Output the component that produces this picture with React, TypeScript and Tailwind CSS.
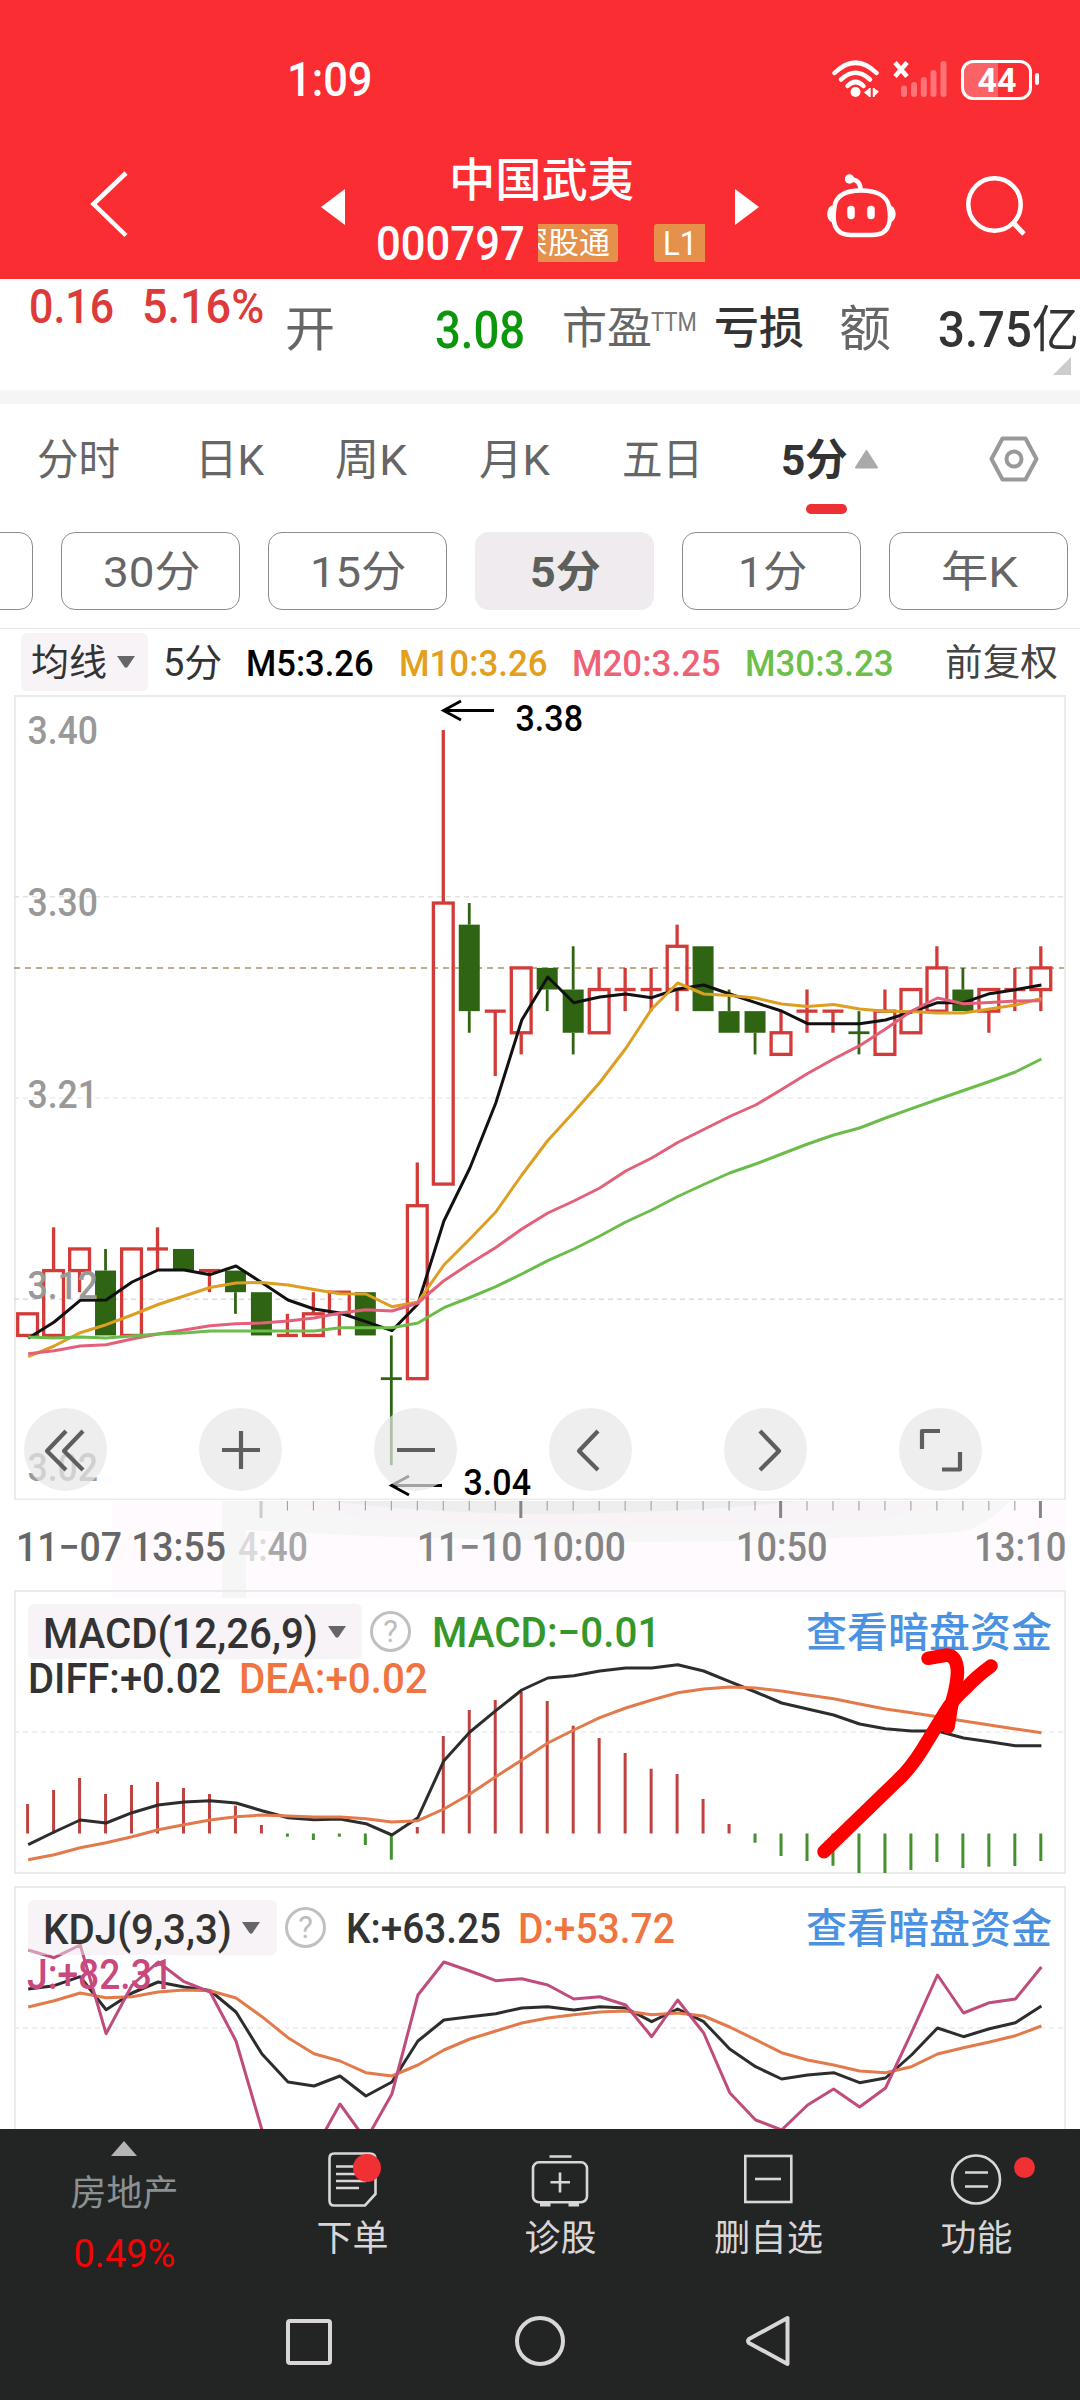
import { useLayoutEffect, useRef, type ReactNode } from 'react';

/** One line of text whose glyphs are squeezed to fill the width of its box. */
function Fit({ className = '', children }: { className?: string; children: ReactNode }) {
  const box = useRef<HTMLSpanElement>(null);
  const ink = useRef<HTMLSpanElement>(null);
  useLayoutEffect(() => {
    const b = box.current;
    const t = ink.current;
    if (!b || !t || !t.offsetWidth) return;
    t.style.transform = `translateX(-1px) scaleX(${(b.clientWidth + 3) / t.offsetWidth})`;
  });
  return (
    <span ref={box} className={`block shrink-0 leading-none whitespace-nowrap ${className}`}>
      <span ref={ink} className="inline-block origin-left leading-none">
        {children}
      </span>
    </span>
  );
}

const X0 = 27.6;
const STEP = 25.98;
const cx = (i: number) => X0 + i * STEP;
const py = (p: number) => 967.9 + (3.27 - p) * 2162;
const pts = (ys: number[]) => ys.map((y, i) => `${(cx(i) + 0.6).toFixed(1)},${y}`).join(' ');

type Candle = ['r' | 'g', number, number, number, number];

// colour, body top, body bottom, high, low
const candles: Candle[] = [
  ['r', 3.11, 3.1, 3.11, 3.1],
  ['r', 3.13, 3.1, 3.15, 3.1],
  ['r', 3.14, 3.13, 3.14, 3.12],
  ['g', 3.13, 3.1, 3.14, 3.1],
  ['r', 3.14, 3.1, 3.14, 3.1],
  ['r', 3.14, 3.14, 3.15, 3.13],
  ['g', 3.14, 3.13, 3.14, 3.13],
  ['r', 3.13, 3.13, 3.13, 3.12],
  ['g', 3.13, 3.12, 3.13, 3.11],
  ['g', 3.12, 3.1, 3.12, 3.1],
  ['r', 3.1, 3.1, 3.11, 3.1],
  ['r', 3.11, 3.1, 3.12, 3.1],
  ['r', 3.12, 3.11, 3.12, 3.1],
  ['g', 3.12, 3.1, 3.12, 3.1],
  ['g', 3.08, 3.08, 3.1, 3.04],
  ['r', 3.16, 3.08, 3.18, 3.08],
  ['r', 3.3, 3.17, 3.38, 3.17],
  ['g', 3.29, 3.25, 3.3, 3.24],
  ['r', 3.25, 3.25, 3.25, 3.22],
  ['r', 3.27, 3.24, 3.27, 3.23],
  ['g', 3.27, 3.26, 3.27, 3.25],
  ['g', 3.26, 3.24, 3.28, 3.23],
  ['r', 3.26, 3.24, 3.27, 3.24],
  ['r', 3.26, 3.26, 3.27, 3.25],
  ['r', 3.26, 3.26, 3.27, 3.25],
  ['r', 3.28, 3.26, 3.29, 3.25],
  ['g', 3.28, 3.25, 3.28, 3.25],
  ['g', 3.25, 3.24, 3.26, 3.24],
  ['g', 3.25, 3.24, 3.25, 3.23],
  ['r', 3.24, 3.23, 3.25, 3.23],
  ['r', 3.25, 3.25, 3.26, 3.24],
  ['r', 3.25, 3.25, 3.25, 3.24],
  ['g', 3.24, 3.24, 3.25, 3.23],
  ['r', 3.25, 3.23, 3.26, 3.23],
  ['r', 3.26, 3.24, 3.26, 3.24],
  ['r', 3.27, 3.25, 3.28, 3.25],
  ['g', 3.26, 3.25, 3.27, 3.25],
  ['r', 3.26, 3.25, 3.26, 3.24],
  ['r', 3.26, 3.26, 3.27, 3.25],
  ['r', 3.27, 3.26, 3.28, 3.25],
];

const m5 = [1338.3, 1322, 1300.3, 1300, 1282, 1270, 1270, 1274.7, 1266, 1282.7, 1300, 1309, 1313, 1321.7, 1330.7, 1304, 1221, 1168, 1103, 1020, 977, 1002.7, 997, 994, 997.7, 989, 985, 994, 1002.7, 1011, 1023.7, 1023.7, 1023.7, 1020, 1012, 1002.7, 1002.7, 993.7, 989.7, 985];
const m10 = [1356.7, 1346, 1332.7, 1324.7, 1315, 1304.5, 1296, 1287.5, 1283, 1282.5, 1285, 1289.5, 1293.8, 1294, 1306.7, 1302, 1265, 1239, 1212, 1175, 1140.5, 1112, 1082.5, 1048.5, 1009, 983, 994, 995.5, 998, 1004, 1006.5, 1004.5, 1009, 1011.3, 1011.5, 1013, 1013, 1009, 1005, 998.5];
const m20 = [1353.7, 1350.7, 1346, 1344.7, 1339, 1334, 1330, 1325.7, 1323.7, 1323, 1321, 1318, 1313, 1309.7, 1311, 1303, 1280.7, 1263.5, 1247.5, 1229, 1213, 1201, 1188, 1171, 1158, 1142.5, 1129.5, 1116.5, 1105, 1089.5, 1073.5, 1059, 1045.7, 1029, 1011, 998, 1003.7, 1002.5, 1001, 1000.7];
const m30 = [1337, 1338, 1337, 1338, 1336, 1334, 1333, 1331, 1331, 1331, 1331, 1331, 1327.7, 1327.7, 1327.7, 1323, 1307.7, 1297.5, 1286.7, 1274, 1260.7, 1249, 1236, 1222, 1210, 1196.5, 1184.5, 1173, 1164, 1154, 1144, 1135, 1128, 1118, 1108.7, 1099.5, 1090.5, 1081.5, 1072, 1059];

const macdBars = [1804, 1790, 1778, 1794, 1785, 1782, 1788, 1794, 1805.7, 1825, 1836.7, 1840, 1836.7, 1845, 1859.7, 1827, 1736, 1710, 1700, 1692, 1701, 1725.7, 1738, 1753, 1768.7, 1774, 1799, 1824, 1842.7, 1856, 1861, 1865.7, 1873, 1873, 1870, 1862, 1868, 1866.7, 1866, 1861];
const diff = [1844.7, 1832, 1820, 1823, 1812.7, 1805, 1802, 1800.7, 1803, 1810.7, 1817.7, 1819.7, 1819, 1823.7, 1835, 1817.7, 1760.7, 1732, 1710.7, 1690, 1678, 1675.7, 1671, 1668, 1668, 1664.7, 1671, 1681.7, 1692, 1703, 1709, 1715, 1724, 1728.7, 1731, 1731, 1738, 1741.7, 1745.7, 1745.7];
const dea = [1859.7, 1854.7, 1847.7, 1842.7, 1836.7, 1829.7, 1824.7, 1820, 1816.7, 1815, 1816, 1817, 1817, 1818.7, 1822, 1820.7, 1809, 1794, 1776.7, 1760, 1743, 1730, 1717.7, 1708, 1700, 1692.7, 1689, 1687, 1688, 1691, 1695, 1698.7, 1704, 1709, 1712.7, 1716.7, 1721, 1725, 1729, 1732.7];
const kLine = [1989, 1985.7, 1976.7, 2009.7, 1993, 1982, 1987, 1990.5, 2012, 2054, 2082, 2086, 2076, 2096, 2082, 2041, 2020, 2016.7, 2013.7, 2008, 2006.7, 2010, 2006.7, 2008, 2021.7, 2009, 2021.7, 2049, 2066.7, 2079, 2075, 2072.7, 2082.7, 2078, 2055, 2028, 2036.7, 2028.7, 2022.7, 2006];
const dLine = [2007, 2000.7, 1993, 1997.7, 1996.7, 1992, 1990, 1990.7, 1998, 2016.7, 2037.7, 2053.7, 2061, 2072.7, 2076, 2065, 2050, 2039, 2031, 2023, 2018, 2014.7, 2012, 2011, 2014.7, 2013, 2016, 2027, 2039.7, 2052.7, 2060, 2065, 2071, 2072.7, 2066.7, 2054, 2047.7, 2042, 2035.7, 2026];
const jLine = [1950, 1957.7, 1945, 2033.7, 1985, 1962, 1981.7, 1992, 2041, 2130, 2190, 2151, 2104, 2140, 2094, 1995, 1962, 1971, 1980.7, 1978.7, 1985, 1999, 1996.7, 2005, 2036.7, 2000, 2033, 2092.7, 2120, 2130, 2105, 2089, 2107, 2088, 2032.7, 1975, 2013, 2002.7, 1999, 1967];

const RED = '#d23b38';
const GREEN = '#2f6412';

function Line({ ys, color }: { ys: number[]; color: string }) {
  return <polyline points={pts(ys)} fill="none" stroke={color} strokeWidth="3" strokeLinejoin="round" />;
}

function CandleShape({ c, i }: { c: Candle; i: number }) {
  const [kind, top, bottom, high, low] = c;
  const x = cx(i);
  const color = kind === 'r' ? RED : GREEN;
  const w = kind === 'r' ? 3.3 : 2.8;
  return (
    <g stroke={color} strokeWidth={w}>
      {high > top && <line x1={x} x2={x} y1={py(high)} y2={py(top)} />}
      {low < bottom && <line x1={x} x2={x} y1={py(bottom)} y2={py(low)} />}
      {top === bottom ? (
        <line x1={x - 10.5} x2={x + 10.5} y1={py(top)} y2={py(top)} />
      ) : kind === 'r' ? (
        <rect x={x - 9.9} y={py(top)} width={19.8} height={py(bottom) - py(top)} fill="none" />
      ) : (
        <rect x={x - 10.5} y={py(top)} width={21} height={py(bottom) - py(top)} fill={GREEN} stroke="none" />
      )}
    </g>
  );
}

function PriceLabel({ y, x = 28, w = 69, size = 39, color = '#999', children }: { y: number; x?: number; w?: number; size?: number; color?: string; children: string }) {
  return (
    <text x={x - 0.5} y={y} fontSize={size} fontWeight="500" fill={color} textLength={w + 1.5} lengthAdjust="spacingAndGlyphs">
      {children}
    </text>
  );
}

function Grid({ y, color = '#ececec' }: { y: number; color?: string }) {
  return <line x1="14" x2="1065" y1={y} y2={y} stroke={color} strokeWidth="1.6" strokeDasharray="5 4" />;
}

function StatusBar() {
  return (
    <div className="flex h-[129px] items-start pt-[60px]">
      <Fit className="mt-[-4px] ml-[288px] w-[83px] text-[48px] font-medium">1:09</Fit>
      <svg className="ml-[461px] h-[40px] w-[48px]" viewBox="832 60 48 40" fill="none" stroke="#fff">
        <g strokeWidth="4.500" strokeLinecap="round">
          <path d="M834.500 73 Q855.500 52.500 876.500 73" />
          <path d="M841 79.500 Q855.500 66 870 79.500" />
          <path d="M847.500 86 Q855.500 78 863.500 86" />
        </g>
        <circle cx="855.500" cy="92" r="5" fill="#fff" stroke="none" />
        <path d="M864 92.500 L869.500 88 V97 Z M879 91.500 L873.500 88 V97 Z" fill="#fff" stroke="none" />
        <path d="M869.800 88 V97 M873.700 88 V97" strokeWidth="1.800" />
      </svg>
      <svg className="ml-[13px] h-[40px] w-[55px]" viewBox="893 60 55 40" fill="none" strokeLinecap="round">
        <path d="M895 62.500 L907 76.500 M907 62.500 L895 76.500" stroke="#fff" strokeWidth="4.500" strokeLinecap="butt" />
        <path d="M904 88.500 V94 M914 85 V94 M923.800 80 V94 M933.500 73 V94 M943.500 64 V94" stroke="#ff7479" strokeWidth="6" />
      </svg>
      <div className="relative ml-[13px] flex h-[40px] w-[71px] items-center justify-center overflow-hidden rounded-[12px] border-[3px] border-white bg-linear-to-r from-[#fb6266] from-[52%] to-transparent to-[52%]">
        <Fit className="w-[36px] text-[34px] font-bold text-white">44</Fit>
      </div>
      <div className="mt-[13px] ml-[3px] h-[12px] w-[4px] rounded-full bg-white" />
    </div>
  );
}

function TitleBar() {
  return (
    <div className="flex h-[150px] items-center">
      <svg className="ml-[89px] h-[68px] w-[40px]" viewBox="89 170 40 68" fill="none" stroke="#fff" strokeWidth="4.500">
        <path d="M126 173 L93.500 204 L126 235.500" />
      </svg>
      <svg className="mt-[6px] ml-[192px] h-[36px] w-[24px]" viewBox="0 0 24 36" fill="#fff">
        <path d="M0 18 L24 0 V36 Z" />
      </svg>
      <div className="ml-[32px] flex h-[116px] w-[328px] flex-col pt-[10px]">
        <div className="flex h-[48px] items-center justify-center">
          <Fit className="-mt-[1px] w-[182px] text-[46px] font-medium">中国武夷</Fit>
        </div>
        <div className="mt-[20px] flex h-[38px] items-center">
          <Fit className="mt-[1px] w-[146px] text-[48px] font-medium">000797</Fit>
          <div className="ml-[15px] flex h-[38px] w-[80px] justify-end overflow-hidden rounded-r-[3px] bg-[#e5914b]">
            <Fit className="mt-[4px] mr-[10px] w-[90px] text-[30px]">深股通</Fit>
          </div>
          <div className="ml-[36px] flex h-[38px] w-[51px] items-center justify-center rounded-l-[3px] bg-[#e5914b]">
            <Fit className="w-[31px] text-[33px]">L1</Fit>
          </div>
        </div>
      </div>
      <svg className="mt-[6px] ml-[30px] h-[36px] w-[24px]" viewBox="0 0 24 36" fill="#fff">
        <path d="M24 18 L0 0 V36 Z" />
      </svg>
      <svg className="mt-[3px] ml-[66px] h-[66px] w-[72px]" viewBox="825 172.500 72 66" fill="none" stroke="#fff" strokeWidth="4.500">
        <path d="M834.500 206 C836 195 846 190 861 190 C876 190 887 195 889 206 C890.500 214 890.500 220 888.500 225 C886 232 880 234.500 872 234.500 H851 C843 234.500 837.500 232 835 225 C833 220 833.500 213 834.500 206 Z" />
        <path d="M860.500 189 C860.500 182 857 179 850 178.500" />
        <circle cx="849.500" cy="178.500" r="4.700" fill="#fff" stroke="none" />
        <path d="M832.500 205 C826 206 825 220 832.500 222 Z M890 205 C897 206 898 220 890 222 Z" fill="#fff" stroke="none" />
        <path d="M851 209 V215 M871 209 V215" strokeWidth="7.500" strokeLinecap="round" />
      </svg>
      <svg className="mt-[3px] ml-[67px] h-[62px] w-[64px]" viewBox="964 176 64 62" fill="none" stroke="#fff">
        <circle cx="994.500" cy="205.500" r="26.200" strokeWidth="4.500" />
        <path d="M1013 223.500 L1024 235" strokeWidth="5" />
      </svg>
    </div>
  );
}

function QuoteRow() {
  return (
    <div className="h-[111px] bg-white">
      <div className="relative flex h-[100px] items-center">
        <Fit className="-mt-[46px] ml-[30px] w-[82px] text-[49px] font-medium text-[#dd3a3a]">0.16</Fit>
        <Fit className="-mt-[46px] ml-[31px] w-[119px] text-[49px] font-medium text-[#dd3a3a]">5.16%</Fit>
        <Fit className="mt-[2px] ml-[24px] w-[47px] text-[48px] text-[#666]">开</Fit>
        <Fit className="mt-[2px] ml-[103px] w-[87px] text-[51px] font-medium text-[#0c960c]">3.08</Fit>
        <Fit className="ml-[40px] w-[87px] text-[44px] text-[#666]">市盈</Fit>
        <Fit className="-mt-[14px] ml-[2px] w-[43px] text-[25px] text-[#777]">TTM</Fit>
        <Fit className="ml-[20px] w-[87px] text-[44px] font-medium text-[#333]">亏损</Fit>
        <Fit className="ml-[38px] w-[49px] text-[49px] text-[#666]">额</Fit>
        <Fit className="mt-[2px] ml-[50px] w-[138px] text-[50px] font-medium text-[#333]">3.75<span className="font-normal">亿</span></Fit>
        <svg className="absolute top-[78px] left-[1053px] h-[18px] w-[18px]" viewBox="0 0 18 18" fill="#ccc">
          <path d="M18 0 V18 H0 Z" />
        </svg>
      </div>
    </div>
  );
}

function PeriodTabs() {
  const tab = 'text-[#666] text-[43px]';
  return (
    <div className="h-[110px] bg-white">
      <div className="relative flex h-[110px] items-center">
        <Fit className={`mt-[2px] ml-[38px] w-[80px] ${tab}`}>分时</Fit>
        <Fit className={`mt-[2px] ml-[78px] w-[66px] ${tab}`}>日K</Fit>
        <Fit className={`mt-[2px] ml-[74px] w-[69px] ${tab}`}>周K</Fit>
        <Fit className={`mt-[2px] ml-[75px] w-[68px] ${tab}`}>月K</Fit>
        <Fit className={`mt-[2px] ml-[75px] w-[78px] ${tab}`}>五日</Fit>
        <Fit className="mt-[2px] ml-[81px] w-[64px] text-[43px] font-bold text-[#333]">5分</Fit>
        <svg className="ml-[9px] h-[20px] w-[23px]" viewBox="0 0 23 20" fill="#aaa" stroke="#aaa" strokeWidth="2" strokeLinejoin="round">
          <path d="M11.500 2 L22 18.500 H1 Z" />
        </svg>
        <svg className="ml-[110px] h-[48px] w-[52px]" viewBox="0 0 52 48" fill="none" stroke="#999" strokeWidth="4" strokeLinejoin="round">
          <path d="M14.500 3.500 H37.500 L48.500 24 L37.500 44.500 H14.500 L3.500 24 Z" />
          <circle cx="26" cy="24" r="7.500" />
        </svg>
        <div className="absolute top-[100px] left-[806px] h-[10px] w-[41px] rounded-full bg-[#ee3035]" />
      </div>
    </div>
  );
}

function Chip({ active = false, children }: { active?: boolean; children?: ReactNode }) {
  return (
    <div
      className={`flex h-[78px] w-[179px] shrink-0 items-center justify-center rounded-[14px] pt-[2px] text-[43px] ${
        active ? 'bg-[#efebee] font-bold text-[#5c5f5a]' : 'border border-[#8c8c8c] text-[#666]'
      }`}
    >
      {children}
    </div>
  );
}

function PeriodChips() {
  return (
    <div className="mt-[18px] overflow-hidden">
      <div className="-ml-[146px] flex gap-7">
        <Chip />
        <Chip><Fit className="w-[94px]">30分</Fit></Chip>
        <Chip><Fit className="w-[93px]">15分</Fit></Chip>
        <Chip active><Fit className="w-[68px]">5分</Fit></Chip>
        <Chip><Fit className="w-[66px]">1分</Fit></Chip>
        <Chip><Fit className="w-[74px]">年K</Fit></Chip>
      </div>
    </div>
  );
}

function Caret() {
  return (
    <svg className="h-[12px] w-[18px] shrink-0" viewBox="0 0 18 12" fill="#666">
      <path d="M0 0 H18 L10.500 11 Q9 12.500 7.500 11 Z" />
    </svg>
  );
}

function AverageRow() {
  return (
    <div className="mt-[18px] flex h-[67px] items-center border-t border-[#e8e8e8]">
      <div className="ml-[21px] flex h-[58px] w-[127px] items-center gap-[12px] rounded-[6px] bg-[#f7f3f7] pl-[11px]">
        <Fit className="mt-[2px] w-[73px] text-[37px] text-[#333]">均线</Fit>
        <Caret />
      </div>
      <Fit className="mt-[2px] ml-[16px] w-[56px] text-[38px] text-[#333]">5分</Fit>
      <Fit className="mt-[3px] ml-[27px] w-[125px] text-[37px] font-medium text-black">M5:3.26</Fit>
      <Fit className="mt-[3px] ml-[28px] w-[146px] text-[37px] font-medium text-[#e2a01c]">M10:3.26</Fit>
      <Fit className="mt-[3px] ml-[27px] w-[146px] text-[37px] font-medium text-[#ee6277]">M20:3.25</Fit>
      <Fit className="mt-[3px] ml-[27px] w-[146px] text-[37px] font-medium text-[#6cbf4a]">M30:3.23</Fit>
      <Fit className="mt-[2px] ml-[54px] w-[110px] text-[37px] text-[#444]">前复权</Fit>
    </div>
  );
}

function RoundButton({ d, join = 'miter' }: { d: string; join?: 'miter' | 'round' }) {
  return (
    <div className="flex h-[83px] w-[83px] items-center justify-center rounded-full bg-[#e7e7e7b3]">
      <svg className="h-[60px] w-[60px]" viewBox="-30 -30 60 60" fill="none" stroke="#5e5e5e" strokeWidth="4.200" strokeLinejoin={join}>
        <path d={d} />
      </svg>
    </div>
  );
}

function PriceChart() {
  return (
    <div className="relative h-[805px]">
      <svg className="absolute inset-0 h-full w-full" viewBox="0 695 1080 805">
        <rect x="15" y="696" width="1050" height="803.500" fill="none" stroke="#ebebeb" strokeWidth="2" />
        <Grid y={896.7} color="#e2e2e2" />
        <Grid y={1098} />
        <Grid y={1299.3} color="#dcdcdc" />
        <line x1="14" x2="1064" y1="967.900" y2="967.900" stroke="#b9b08a" strokeWidth="2" strokeDasharray="6 5" />
        {candles.map((c, i) => (
          <CandleShape key={i} c={c} i={i} />
        ))}
        <Line ys={m5} color="#111" />
        <Line ys={m10} color="#dc9f22" />
        <Line ys={m20} color="#e3607a" />
        <Line ys={m30} color="#6cbc4b" />
        <PriceLabel y={743.5}>3.40</PriceLabel>
        <PriceLabel y={915.5}>3.30</PriceLabel>
        <PriceLabel y={1107.5}>3.21</PriceLabel>
        <PriceLabel y={1298.5}>3.12</PriceLabel>
        <PriceLabel y={1480.5}>3.02</PriceLabel>
        <path d="M494 710.500 H443.500 M461 701 L443.500 710.500 L461 720" fill="none" stroke="#000" strokeWidth="2.800" />
        <PriceLabel y={731} x={516} w={66} size={36} color="#000">3.38</PriceLabel>
        <path d="M442 1485.500 H391.500 M409 1476 L391.500 1485.500 L409 1495" fill="none" stroke="#000" strokeWidth="2.800" />
        <PriceLabel y={1494.5} x={464} w={66} size={36} color="#000">3.04</PriceLabel>
      </svg>
      <div className="absolute top-[713px] left-[24px] flex gap-[92px]">
        <RoundButton d="M0 -19 L-19 1 L0 20 M17 -19 L-2 1 L17 20" join="round" />
        <RoundButton d="M-19 0 H19 M0 -19 V19" />
        <RoundButton d="M-19 0 H19" />
        <RoundButton d="M7 -19 L-12 1 L7 20" join="round" />
        <RoundButton d="M-6 -19 L13 1 L-6 20" join="round" />
        <RoundButton d="M-19 -1 V-19 H-1 M19 2 V19.500 H1" join="round" />
      </div>
    </div>
  );
}

function TimeAxis() {
  return (
    <div className="relative h-[90px]">
      <svg className="absolute inset-0 h-[98px] w-full" viewBox="0 1500 1080 98">
        <rect x="112" y="1501" width="954" height="97" fill="#fefafe" />
        <path d="M222 1501 H1010 Q985 1527 960 1532 L890 1536 Q700 1544 560 1541 Q400 1538 330 1534 L246 1530 V1598 H222 Z" fill="#f6f6f6" />
        <path d="M290 1501 H950 Q900 1520 820 1523 Q600 1528 430 1522 Q330 1518 290 1501 Z" fill="#f7f3f6" />
        <path d="M330 1501 H800 Q700 1512 560 1514 Q430 1514 330 1501 Z" fill="#eeeeee" />
        {Array.from({ length: 31 }, (_, k) => k + 9).map((i) =>
          i % 10 === 9 ? (
            <line key={i} x1={cx(i) - 0.4} x2={cx(i) - 0.4} y1="1501" y2="1518" stroke={i === 9 ? '#ccc' : '#858585'} strokeWidth="3" />
          ) : (
            <line key={i} x1={cx(i)} x2={cx(i)} y1="1501" y2="1510.500" stroke="#999" strokeWidth="1" />
          ),
        )}
      </svg>
      <div className="relative flex h-[95px] items-center text-[40px] font-medium text-[#858585]">
        <Fit className="ml-[17px] w-[207px] text-[#666]">11−07 13:55</Fit>
        <Fit className="ml-[15px] w-[67px] text-[#a8a8a8]"><span className="text-[#dadada]">4:</span>40</Fit>
        <Fit className="ml-[112px] w-[206px]">11−10 10:00</Fit>
        <Fit className="ml-[113px] w-[88px]">10:50</Fit>
        <Fit className="ml-[150px] w-[89px]">13:10</Fit>
      </div>
    </div>
  );
}

function Help() {
  return (
    <div className="flex h-[41px] w-[41px] shrink-0 items-center justify-center rounded-full border-[3px] border-[#c0c0c0] text-[31px] leading-none text-[#bdbdbd]">
      ?
    </div>
  );
}

function MacdPanel() {
  return (
    <div className="relative h-[284px]">
      <svg className="absolute inset-0 h-full w-full" viewBox="0 1590 1080 284">
        <rect x="15" y="1591" width="1050" height="282" fill="none" stroke="#ebebeb" strokeWidth="2" />
        <Grid y={1732} />
        {macdBars.map((y, i) => (
          <line key={i} x1={cx(i)} x2={cx(i)} y1={y < 1833 ? y : 1833.5} y2={y < 1833 ? 1833.5 : y} stroke={y < 1833 ? '#bd4240' : '#44902f'} strokeWidth="3" />
        ))}
        <Line ys={diff} color="#2d2d2d" />
        <Line ys={dea} color="#e27a4b" />
      </svg>
      <div className="relative flex items-center pt-[14px]">
        <div className="ml-[28px] flex h-[55px] w-[334px] items-center gap-[12px] rounded-[6px] bg-[#f7f3f7] pl-[16px]">
          <Fit className="mt-[4px] w-[272px] text-[42px] font-medium text-[#333]">MACD(12,26,9)</Fit>
          <Caret />
        </div>
        <div className="ml-[8px]"><Help /></div>
        <Fit className="mt-[3px] ml-[22px] w-[225px] text-[42px] font-medium text-[#35962a]">MACD:−0.01</Fit>
        <Fit className="mt-[3px] ml-[149px] w-[243px] text-[41px] font-medium text-[#4b91e2]">查看暗盘资金</Fit>
      </div>
      <div className="relative -mt-[2px] flex h-[42px] items-center text-[42px] font-medium">
        <Fit className="mt-[1px] ml-[29px] w-[190px] text-[#333]">DIFF:+0.02</Fit>
        <Fit className="mt-[1px] ml-[21px] w-[186px] text-[#f0743f]">DEA:+0.02</Fit>
      </div>
      <svg className="absolute inset-0 h-full w-full" viewBox="0 1590 1080 284" fill="none" stroke="#ff0000" strokeWidth="13.500" strokeLinecap="round" strokeLinejoin="round">
        <path d="M928 1658.300 L947 1655 Q957 1656 957.500 1672 Q957 1685 952.500 1700 L948 1727" />
        <path d="M991 1666 Q976 1677 967 1687 Q954 1698 944.600 1713 L922 1750 Q910 1769 898 1780 L824 1851.700" />
      </svg>
    </div>
  );
}

function KdjPanel() {
  return (
    <div className="relative mt-[12px] h-[243px] overflow-hidden">
      <svg className="absolute inset-0 h-full w-full" viewBox="0 1886 1080 243">
        <rect x="15" y="1887" width="1050" height="300" fill="none" stroke="#ebebeb" strokeWidth="2" />
        <Grid y={2028} />
        <Line ys={kLine} color="#2d2d2d" />
        <Line ys={dLine} color="#e27a4b" />
        <Line ys={jLine} color="#bf4c7c" />
      </svg>
      <div className="relative flex items-center pt-[14px]">
        <div className="ml-[28px] flex h-[55px] w-[249px] items-center gap-[12px] rounded-[6px] bg-[#f0e8f080] pl-[16px]">
          <Fit className="mt-[4px] w-[186px] text-[42px] font-medium text-[#333]">KDJ(9,3,3)</Fit>
          <Caret />
        </div>
        <div className="ml-[8px]"><Help /></div>
        <Fit className="mt-[3px] ml-[21px] w-[152px] text-[42px] font-medium text-[#333]">K:+63.25</Fit>
        <Fit className="mt-[3px] ml-[20px] w-[154px] text-[42px] font-medium text-[#f0743f]">D:+53.72</Fit>
        <Fit className="mt-[3px] ml-[134px] w-[243px] text-[41px] font-medium text-[#4b91e2]">查看暗盘资金</Fit>
      </div>
      <div className="relative -mt-[2px] flex h-[42px] items-center text-[42px] font-medium">
        <Fit className="mt-[1px] ml-[28px] w-[143px] text-[#c9497f]">J:+82.31</Fit>
      </div>
    </div>
  );
}

function BottomBar() {
  return (
    <div className="flex h-[147px] text-[36px] text-[#d9d6d9]">
      <div className="flex w-[248px] flex-col items-center pt-[12px]">
        <svg className="h-[15px] w-[26px]" viewBox="0 0 26 15" fill="#b5b5b5">
          <path d="M13 0 L26 15 H0 Z" />
        </svg>
        <Fit className="mt-[20px] w-[105px] text-[#8b9093]">房地产</Fit>
        <Fit className="mt-[23px] w-[99px] text-[38px] text-[#f20505]">0.49%</Fit>
      </div>
      <div className="flex w-[208px] flex-col items-center pt-[22px]">
        <svg className="h-[58px] w-[58px]" viewBox="323 2151 58 58" fill="none" stroke="#d9d6d9" strokeWidth="2.600">
          <path d="M334 2153.500 H370 Q375.500 2153.500 375.500 2159 V2194 L365 2205.500 H334 Q329.500 2205.500 329.500 2200.500 V2158.500 Q329.500 2153.500 334 2153.500 Z" />
          <path d="M336 2166.500 H360 M336 2174 H360 M336 2181 H366 M336 2188 H359" />
          <circle cx="367" cy="2168" r="14" fill="#f03033" stroke="none" />
        </svg>
        <Fit className="mt-[12px] w-[69px]">下单</Fit>
      </div>
      <div className="flex w-[208px] flex-col items-center pt-[22px]">
        <svg className="h-[58px] w-[60px]" viewBox="529.500 2151 60 58" fill="none" stroke="#d9d6d9" strokeWidth="2.600">
          <rect x="532.500" y="2162.300" width="54" height="40" rx="6" />
          <path d="M549 2156.500 H571 M559.500 2172.500 V2192.500 M550 2182.300 H569.500" />
          <path d="M539.500 2203 H550 V2206.500 H539.500 Z M568 2203 H578.500 V2206.500 H568 Z" fill="#d9d6d9" stroke="none" />
        </svg>
        <Fit className="mt-[12px] w-[69px]">诊股</Fit>
      </div>
      <div className="flex w-[208px] flex-col items-center pt-[22px]">
        <svg className="h-[58px] w-[58px]" viewBox="738 2151 58 58" fill="none" stroke="#d9d6d9" strokeWidth="2.600">
          <rect x="744.300" y="2156" width="46" height="46" />
          <path d="M754 2179 H780" />
        </svg>
        <Fit className="mt-[12px] w-[106px]">删自选</Fit>
      </div>
      <div className="relative flex w-[208px] flex-col items-center pt-[22px]">
        <svg className="h-[58px] w-[58px]" viewBox="946 2151 58 58" fill="none" stroke="#d9d6d9" strokeWidth="2.600">
          <circle cx="975" cy="2179.500" r="24" />
          <path d="M964 2172.500 H987 M964 2186.500 H987" />
        </svg>
        <Fit className="mt-[12px] w-[69px]">功能</Fit>
        <div className="absolute top-[28px] left-[142px] h-[21px] w-[21px] rounded-full bg-[#f03033]" />
      </div>
    </div>
  );
}

function SystemNav() {
  return (
    <div className="flex h-[124px] items-center pt-[6px]">
      <div className="mb-[-1px] ml-[286px] h-[46px] w-[46px] rounded-[4px] border-[4px] border-[#d9d6d9]" />
      <div className="ml-[183px] h-[50px] w-[50px] rounded-full border-[4px] border-[#d9d6d9]" />
      <svg className="ml-[180px] h-[52px] w-[48px]" viewBox="0 0 48 52" fill="none" stroke="#d9d6d9" strokeWidth="4" strokeLinejoin="round">
        <path d="M42.500 3 V49 L4 28 Q2 26 4 24 Z" />
      </svg>
    </div>
  );
}

export default function App() {
  return (
    <div className="h-[2400px] w-[1080px] overflow-hidden bg-white [font-family:Roboto,'Noto_Sans_CJK_SC',sans-serif]">
      <header className="h-[279px] bg-[#fa2d33] text-white">
        <StatusBar />
        <TitleBar />
      </header>
      <QuoteRow />
      <div className="h-[14px] bg-[#f5f5f5]" />
      <PeriodTabs />
      <PeriodChips />
      <AverageRow />
      <PriceChart />
      <TimeAxis />
      <MacdPanel />
      <KdjPanel />
      <footer className="h-[271px] bg-[#222523]">
        <BottomBar />
        <SystemNav />
      </footer>
    </div>
  );
}
